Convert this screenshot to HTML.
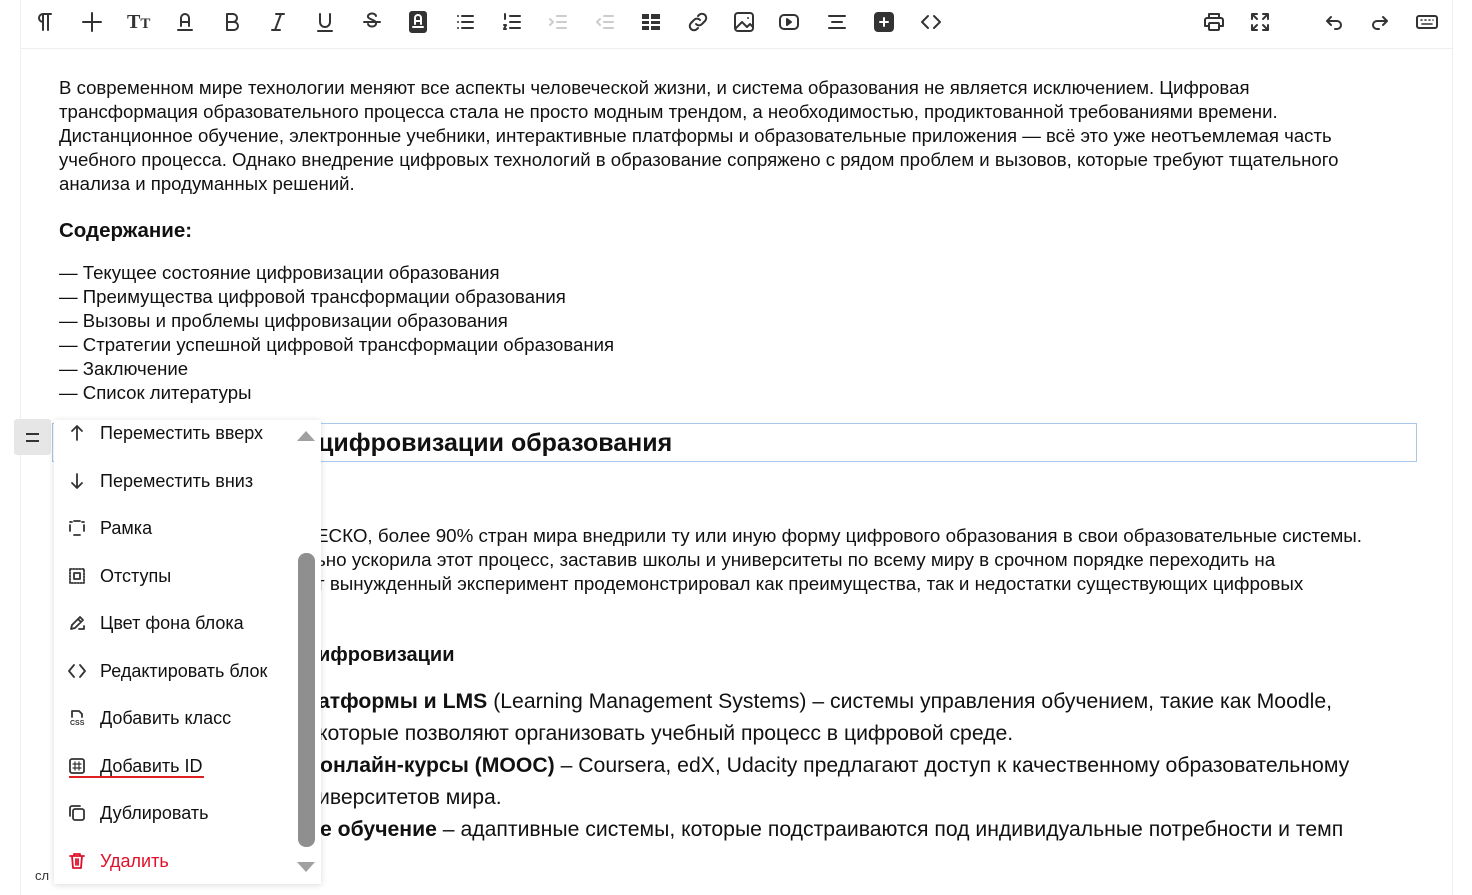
<!DOCTYPE html>
<html><head><meta charset="utf-8"><style>
body{margin:0;width:1472px;height:895px;overflow:hidden;background:#fff;font-family:"Liberation Sans",Arial,sans-serif;color:#111;position:relative}
.ed{position:absolute;left:20px;top:0;width:1431px;height:895px;border-left:1px solid #eee;border-right:1px solid #eee}
.tb{position:absolute;left:20px;top:48px;width:1432px;height:1px;background:#eee}
.ic{position:absolute;top:10px;width:24px;height:24px}
.ic svg{width:24px;height:24px;fill:none;stroke:#333;stroke-width:2;stroke-linecap:round;stroke-linejoin:round}
.t{position:absolute;left:59px;font-size:18.6px;line-height:24px;white-space:nowrap}
.p2{font-size:18.8px}
.l2{font-size:21.2px!important}
.mi{position:absolute;left:54px;width:244px;height:30px;font-size:18px;line-height:30px}
.mi span{position:absolute;left:46px}
.mi svg{position:absolute;left:14px;top:6px;width:18px;height:18px;fill:none;stroke:#333;stroke-width:1.8;stroke-linecap:round;stroke-linejoin:round}
</style></head><body>
<div class="ed"></div><div class="tb"></div>

<div class="ic" style="left:33px"><svg viewBox="0 0 24 24"><path d="M10 20V4h8M15 4v16M10 4a4 4 0 0 0 0 8"/></svg></div>
<div class="ic" style="left:80px"><svg viewBox="0 0 24 24"><path d="M12 3v18M3 12h18"/></svg></div>
<div class="ic" style="left:127px;font:bold 20px 'Liberation Serif',serif;color:#333;line-height:24px">T<span style="font-size:15px">T</span></div>
<div class="ic" style="left:173px"><svg viewBox="0 0 24 24"><path d="M8 16V8a4 4 0 0 1 8 0v8M8 12h8M5 20h14"/></svg></div>
<div class="ic" style="left:220px"><svg viewBox="0 0 24 24"><path d="M7 4h6a4 4 0 0 1 0 8H7zM7 12h7a4 4 0 0 1 0 8H7z"/></svg></div>
<div class="ic" style="left:266px"><svg viewBox="0 0 24 24"><path d="M10 4h8M6 20h8M15 4l-6 16"/></svg></div>
<div class="ic" style="left:313px"><svg viewBox="0 0 24 24"><path d="M7 4v8a5 5 0 0 0 10 0V4M5 21h14"/></svg></div>
<div class="ic" style="left:360px"><svg viewBox="0 0 24 24"><path d="M4 12h16M16 6a4 3 0 0 0-8 1c0 2 8 3 8 6a4 3 0 0 1-8 1"/></svg></div>
<div class="ic" style="left:406px"><svg viewBox="0 0 24 24"><rect x="4" y="2" width="16" height="20" rx="2" fill="#333"/><path d="M9 14V8a3 3 0 0 1 6 0v6M9 11h6M7 17h10" stroke="#fff"/></svg></div>
<div class="ic" style="left:453px"><svg viewBox="0 0 24 24"><path d="M9 6h11M9 12h11M9 18h11M5 6h0M5 12h0M5 18h0"/></svg></div>
<div class="ic" style="left:500px"><svg viewBox="0 0 24 24"><path d="M10 6h10M10 12h10M10 18h10M5 4v5M4 15h2l-2 4h2"/></svg></div>
<div class="ic" style="left:546px"><svg viewBox="0 0 24 24" style="stroke:#ccc"><path d="M11 6h9M11 12h9M11 18h9M4 9l3 3-3 3"/></svg></div>
<div class="ic" style="left:593px"><svg viewBox="0 0 24 24" style="stroke:#ccc"><path d="M11 6h9M11 12h9M11 18h9M7 9l-3 3 3 3"/></svg></div>
<div class="ic" style="left:639px"><svg viewBox="0 0 24 24"><rect x="3" y="4" width="18" height="16" fill="#333" stroke="none"/><path d="M3 10h18M3 15h18M11 4v16" stroke="#fff"/></svg></div>
<div class="ic" style="left:686px"><svg viewBox="0 0 24 24"><path d="M10 14a4 4 0 0 0 6 0l3-3a4 4 0 0 0-6-6l-1 1M14 10a4 4 0 0 0-6 0l-3 3a4 4 0 0 0 6 6l1-1"/></svg></div>
<div class="ic" style="left:732px"><svg viewBox="0 0 24 24"><rect x="3" y="3" width="18" height="18" rx="3"/><path d="M4 18l6-6 5 5 3-3 3 3M16 8h0"/></svg></div>
<div class="ic" style="left:777px"><svg viewBox="0 0 24 24"><rect x="3" y="5" width="18" height="14" rx="4"/><path d="M10 9l4 3-4 3z" fill="#333"/></svg></div>
<div class="ic" style="left:825px"><svg viewBox="0 0 24 24"><path d="M4 6h16M7 12h10M4 18h16"/></svg></div>
<div class="ic" style="left:872px"><svg viewBox="0 0 24 24"><rect x="3" y="3" width="18" height="18" rx="3" fill="#333"/><path d="M12 8v8M8 12h8" stroke="#fff"/></svg></div>
<div class="ic" style="left:919px"><svg viewBox="0 0 24 24"><path d="M9 6l-6 6 6 6M15 6l6 6-6 6"/></svg></div>
<div class="ic" style="left:1202px"><svg viewBox="0 0 24 24"><path d="M7 8V4h10v4M5 8h14a2 2 0 0 1 2 2v6h-4M7 16H3v-6a2 2 0 0 1 2-2"/><rect x="7" y="13" width="10" height="7" rx="1"/></svg></div>
<div class="ic" style="left:1248px"><svg viewBox="0 0 24 24"><path d="M4 4l5 5M4 4v5M4 4h5M20 4l-5 5M20 4v5M20 4h-5M4 20l5-5M4 20v-5M4 20h5M20 20l-5-5M20 20v-5M20 20h-5"/></svg></div>
<div class="ic" style="left:1322px"><svg viewBox="0 0 24 24"><path d="M9 7L5 11l4 4M5 11h10a4 4 0 0 1 0 8h-2"/></svg></div>
<div class="ic" style="left:1368px"><svg viewBox="0 0 24 24"><path d="M15 7l4 4-4 4M19 11H9a4 4 0 0 0 0 8h2"/></svg></div>
<div class="ic" style="left:1415px"><svg viewBox="0 0 24 24"><rect x="2" y="6" width="20" height="12" rx="2"/><path d="M6 10h1M10 10h1M14 10h1M18 10h0M7 14h10" stroke-width="1.6"/></svg></div>

<div class="t" style="top:76px">В современном мире технологии меняют все аспекты человеческой жизни, и система образования не является исключением. Цифровая</div>
<div class="t" style="top:100px">трансформация образовательного процесса стала не просто модным трендом, а необходимостью, продиктованной требованиями времени.</div>
<div class="t" style="top:124px">Дистанционное обучение, электронные учебники, интерактивные платформы и образовательные приложения — всё это уже неотъемлемая часть</div>
<div class="t" style="top:148px">учебного процесса. Однако внедрение цифровых технологий в образование сопряжено с рядом проблем и вызовов, которые требуют тщательного</div>
<div class="t" style="top:172px">анализа и продуманных решений.</div>
<div class="t" style="top:219px;font-weight:bold;font-size:20.5px">Содержание:</div>
<div class="t" style="top:261px">— Текущее состояние цифровизации образования</div>
<div class="t" style="top:285px">— Преимущества цифровой трансформации образования</div>
<div class="t" style="top:309px">— Вызовы и проблемы цифровизации образования</div>
<div class="t" style="top:333px">— Стратегии успешной цифровой трансформации образования</div>
<div class="t" style="top:357px">— Заключение</div>
<div class="t" style="top:381px">— Список литературы</div>

<div style="position:absolute;left:52px;top:423px;width:1363px;height:37px;border:1.5px solid #a8c8ec"></div>
<div class="t" style="left:318px;top:429px;font-weight:bold;font-size:25px;line-height:28px">цифровизации образования</div>
<div class="t p2" style="left:316px;top:524px">ЕСКО, более 90% стран мира внедрили ту или иную форму цифрового образования в свои образовательные системы.</div>
<div class="t p2" style="left:316px;top:548px">ьно ускорила этот процесс, заставив школы и университеты по всему миру в срочном порядке переходить на</div>
<div class="t p2" style="left:316px;top:572px">т вынужденный эксперимент продемонстрировал как преимущества, так и недостатки существующих цифровых</div>
<div class="t" style="left:318px;top:643px;font-weight:bold;font-size:20px">ифровизации</div>
<div class="t l2" style="left:318px;top:689px;line-height:26px"><b>атформы и LMS</b> (Learning Management Systems) – системы управления обучением, такие как Moodle,</div>
<div class="t l2" style="left:318px;top:721px;line-height:26px">которые позволяют организовать учебный процесс в цифровой среде.</div>
<div class="t l2" style="left:320px;top:753px;line-height:26px"><b>онлайн-курсы (MOOC)</b> – Coursera, edX, Udacity предлагают доступ к качественному образовательному</div>
<div class="t l2" style="left:318px;top:785px;line-height:26px">иверситетов мира.</div>
<div class="t l2" style="left:320px;top:817px;line-height:26px"><b>е обучение</b> – адаптивные системы, которые подстраиваются под индивидуальные потребности и темп</div>
<div class="t" style="left:35px;top:868px;font-size:13px;line-height:16px;color:#333">сл</div>

<div style="position:absolute;left:14px;top:419px;width:37px;height:36px;background:#e6e6e6;border-radius:3px"></div>
<div style="position:absolute;left:26px;top:433px;width:13px;height:2px;background:#333"></div>
<div style="position:absolute;left:26px;top:440px;width:13px;height:2px;background:#333"></div>

<div style="position:absolute;left:54px;top:420px;width:267px;height:464px;background:#fff;box-shadow:0 1px 6px rgba(0,0,0,.15)"></div>
<div class="mi" style="top:418px"><svg viewBox="0 0 18 18"><path d="M9 16V2M4 7l5-5 5 5"/></svg><span>Переместить вверх</span></div>
<div class="mi" style="top:466px"><svg viewBox="0 0 18 18"><path d="M9 2v14M4 11l5 5 5-5"/></svg><span>Переместить вниз</span></div>
<div class="mi" style="top:513px"><svg viewBox="0 0 18 18"><path d="M2 6v6M16 6v6M6 2h6M6 16h6M2 3h2M14 3h2"/></svg><span>Рамка</span></div>
<div class="mi" style="top:561px"><svg viewBox="0 0 18 18"><path d="M2 2h14v14H2z" stroke-dasharray="1.5 1.5"/><rect x="6" y="6" width="6" height="6"/></svg><span>Отступы</span></div>
<div class="mi" style="top:608px"><svg viewBox="0 0 18 18"><path d="M3 15l1-4 8-8 3 3-8 8zM10 5l3 3M11 15h5v-3"/></svg><span>Цвет фона блока</span></div>
<div class="mi" style="top:656px"><svg viewBox="0 0 18 18" style="left:12px;width:22px"><path d="M6 3L1 9l5 6M12 3l5 6-5 6"/></svg><span>Редактировать блок</span></div>
<div class="mi" style="top:703px"><svg viewBox="0 0 18 18"><path d="M4 8V2h7l3 3v3"/><text x="2" y="16" font-size="7" font-weight="bold" fill="#333" stroke="none" font-family="Liberation Sans">CSS</text></svg><span>Добавить класс</span></div>
<div class="mi" style="top:751px"><svg viewBox="0 0 18 18"><rect x="2" y="2" width="14" height="14" rx="2"/><path d="M7 5v8M11 5v8M5 7h8M5 11h8" stroke-width="1.2"/></svg><span>Добавить ID</span></div>
<div style="position:absolute;left:69px;top:776px;width:135px;height:2px;background:#e02020"></div>
<div class="mi" style="top:798px"><svg viewBox="0 0 18 18"><rect x="5" y="5" width="11" height="11" rx="2"/><path d="M12 2H4a2 2 0 0 0-2 2v8"/></svg><span>Дублировать</span></div>
<div class="mi" style="top:846px;color:#e0102a"><svg viewBox="0 0 18 18" style="stroke:#e0102a"><path d="M2 4h14M6 4V2h6v2M4 4l1 12h8l1-12M8 7v6M10 7v6"/></svg><span>Удалить</span></div>

<div style="position:absolute;left:297px;top:431px;width:0;height:0;border-left:9px solid transparent;border-right:9px solid transparent;border-bottom:10px solid #a0a0a0"></div>
<div style="position:absolute;left:297px;top:862px;width:0;height:0;border-left:9px solid transparent;border-right:9px solid transparent;border-top:10px solid #a0a0a0"></div>
<div style="position:absolute;left:298px;top:553px;width:17px;height:294px;background:#8f8f8f;border-radius:8px"></div>
</body></html>
